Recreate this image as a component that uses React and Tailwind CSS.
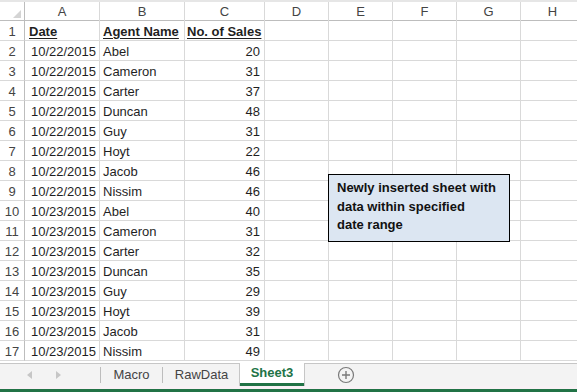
import React from "react";

const rows = [
  ["10/22/2015", "Abel", 20],
  ["10/22/2015", "Cameron", 31],
  ["10/22/2015", "Carter", 37],
  ["10/22/2015", "Duncan", 48],
  ["10/22/2015", "Guy", 31],
  ["10/22/2015", "Hoyt", 22],
  ["10/22/2015", "Jacob", 46],
  ["10/22/2015", "Nissim", 46],
  ["10/23/2015", "Abel", 40],
  ["10/23/2015", "Cameron", 31],
  ["10/23/2015", "Carter", 32],
  ["10/23/2015", "Duncan", 35],
  ["10/23/2015", "Guy", 29],
  ["10/23/2015", "Hoyt", 39],
  ["10/23/2015", "Jacob", 31],
  ["10/23/2015", "Nissim", 49],
];

const letters = ["A", "B", "C", "D", "E", "F", "G", "H"];
const gridCols = "grid grid-cols-[25px_75px_85px_80px_64px_64px_64px_64px_64px]";

function Cell({ children, className = "" }) {
  return (
    <div className={`h-[20px] pt-[2px] border-b border-r border-[#d9d9d9] flex items-center overflow-hidden whitespace-nowrap ${className}`}>
      {children}
    </div>
  );
}

function RowHead({ n }) {
  return (
    <div className="h-[20px] pt-[2px] border-b border-r border-[#d9d9d9] border-r-[#bdbdbd] flex items-center justify-center text-[#444]">
      {n}
    </div>
  );
}

function Blank() {
  return (
    <>
      <Cell />
      <Cell />
      <Cell />
      <Cell />
      <Cell />
    </>
  );
}

export default function App() {
  return (
    <div
      className="w-[577px] h-[392px] overflow-hidden bg-white flex flex-col text-[13px] text-[#1f1f1f] relative"
      style={{ fontFamily: '"Liberation Sans", Arial, sans-serif' }}
    >
      <div className="h-[363px] overflow-hidden">
        {/* column headers */}
        <div className={`${gridCols} h-[21px] border-t-2 border-[#e6e6e6] border-b border-b-[#bdbdbd]`}>
          <div className="border-r border-[#bdbdbd] relative">
            <svg width="25" height="19" className="absolute left-0 top-0">
              <polygon points="13,16 21,16 21,8" fill="#d4d4d4" />
            </svg>
          </div>
          {letters.map((l) => (
            <div key={l} className="border-r border-[#d9d9d9] flex items-center justify-center text-[#444]">
              {l}
            </div>
          ))}
        </div>

        {/* row 1 */}
        <div className={gridCols}>
          <RowHead n={1} />
          <Cell className="pl-[4px] font-bold underline underline-offset-2">Date</Cell>
          <Cell className="pl-[3px] font-bold underline underline-offset-2">Agent Name</Cell>
          <Cell className="pl-[2px] font-bold underline underline-offset-2">No. of Sales</Cell>
          <Blank />
        </div>

        {rows.map(([d, name, n], i) => (
          <div key={i} className={gridCols}>
            <RowHead n={i + 2} />
            <Cell className="justify-end pr-[3px]">{d}</Cell>
            <Cell className="pl-[3px]">{name}</Cell>
            <Cell className="justify-end pr-[4px]">{n}</Cell>
            <Blank />
          </div>
        ))}
      </div>

      {/* callout */}
      <div className="absolute left-[328px] top-[174px] w-[182px] h-[68px] border border-black bg-[#dce6f2] pl-[8px] pt-[4px] font-bold text-[13px] leading-[18.5px] text-[#111]">
        <div>Newly inserted sheet with</div>
        <div>data within specified</div>
        <div>date range</div>
      </div>

      {/* sheet tabs */}
      <div className="flex-1 flex flex-col">
        <div className="h-[23px] bg-[#f3f3f3] border-t border-[#c6c6c6] flex items-stretch">
          <div className="w-[100px] flex items-center">
            <svg width="8" height="10" className="ml-[26px]">
              <polygon points="6,1 1,5 6,9" fill="#c6c6c6" />
            </svg>
            <svg width="8" height="10" className="ml-[20px]">
              <polygon points="2,1 7,5 2,9" fill="#c6c6c6" />
            </svg>
          </div>
          <div className="w-[62px] border-l border-[#bdbdbd] my-[3px] flex items-center justify-center text-[#444]">
            Macro
          </div>
          <div className="w-[78px] border-l border-[#bdbdbd] my-[3px] flex items-center justify-center text-[#444]">
            RawData
          </div>
          <div className="w-[64px] bg-white border-b-[3px] border-[#217346] -mt-px flex items-center justify-center font-bold text-[#217346] shadow-[1px_0_0_#c6c6c6,-1px_0_0_#c6c6c6]">
            Sheet3
          </div>
          <div className="w-[84px] flex items-center justify-center">
            <svg width="18" height="18" viewBox="0 0 18 18">
              <circle cx="9" cy="9" r="7.5" fill="none" stroke="#7a7a7a" strokeWidth="1.2" />
              <path d="M9 5v8M5 9h8" stroke="#7a7a7a" strokeWidth="1.4" />
            </svg>
          </div>
        </div>
        <div className="h-[3px] bg-[#f8f1f5]" />
        <div className="flex-1 bg-[#217346]" />
      </div>
    </div>
  );
}
